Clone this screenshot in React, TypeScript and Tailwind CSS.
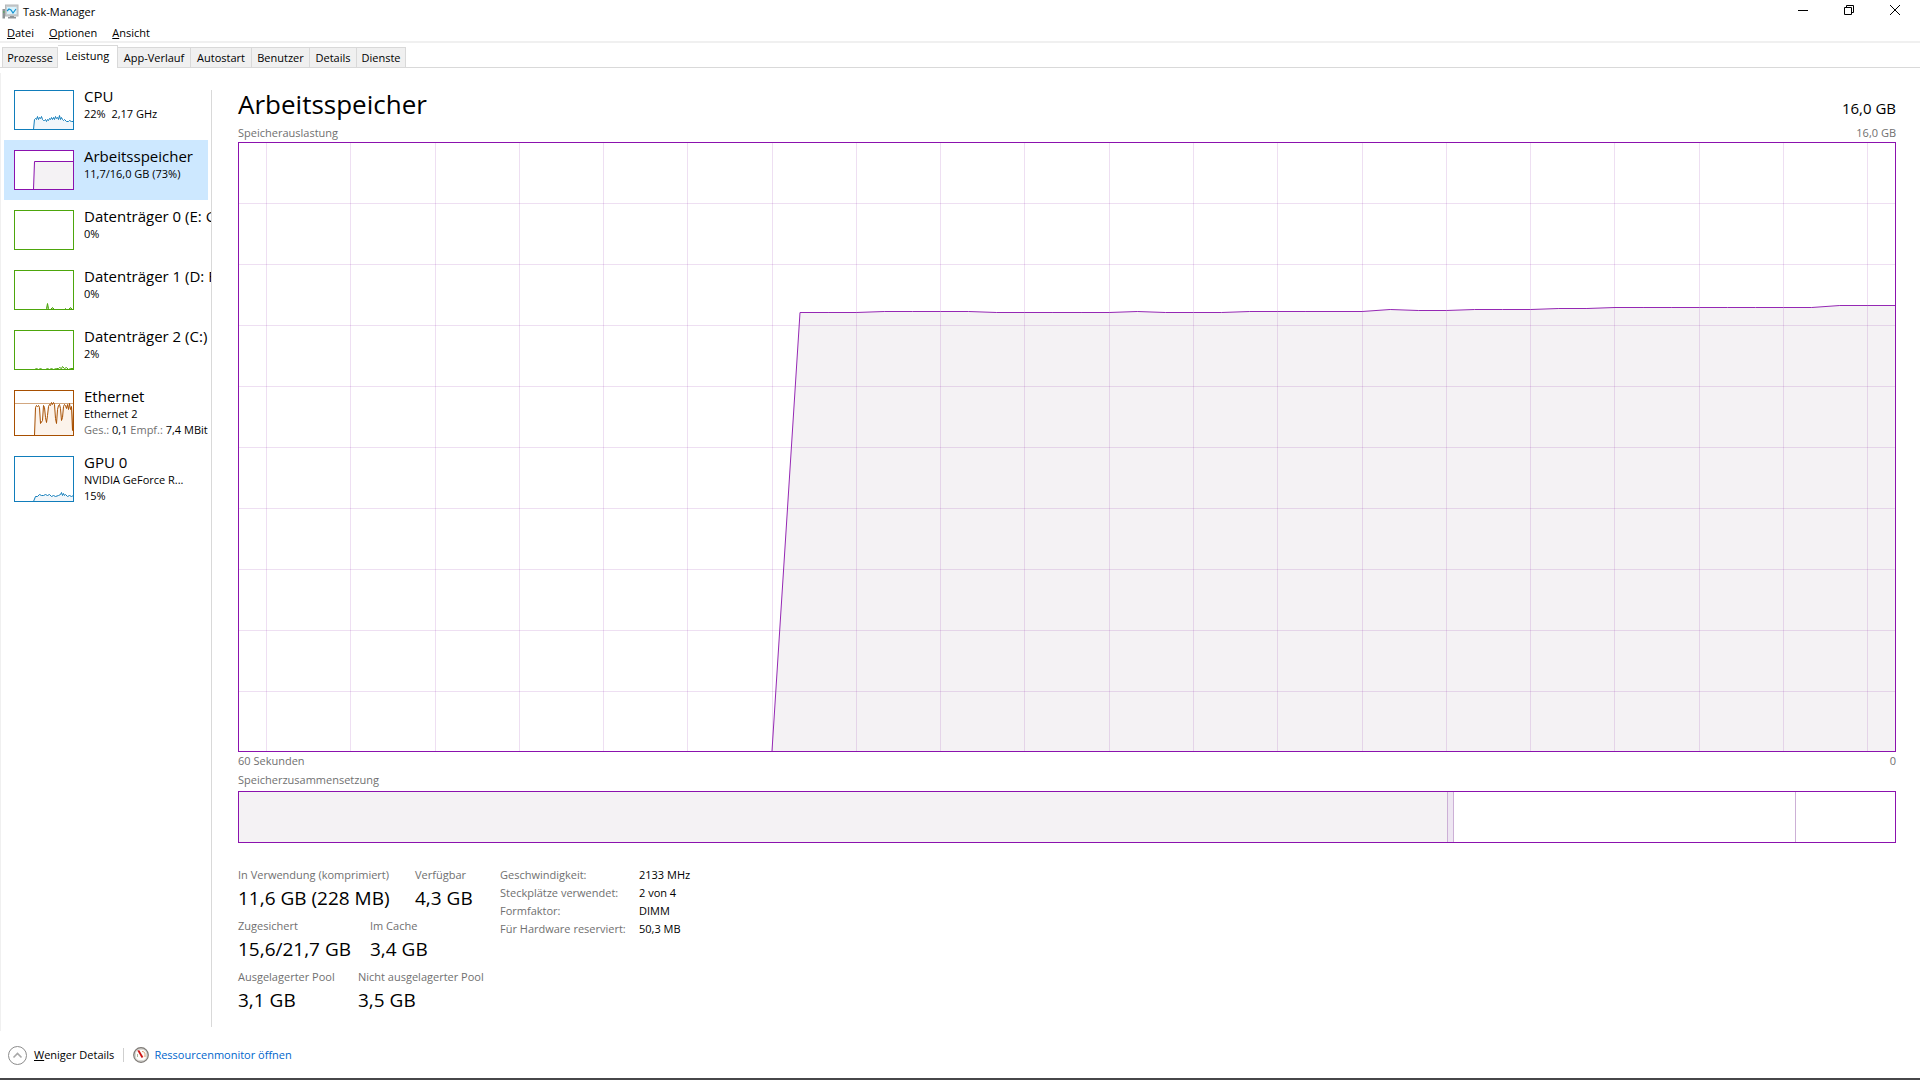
import React from 'react';
import { clsx } from 'clsx';

type Point = [number, number];

interface Resource {
  title: string;
  lines: React.ReactNode[];
  stroke: string;
  fill: string;
  height: number;
  points: Point[];
  limit?: number;
}

const TABS = [
  { label: 'Prozesse', width: 'w-[56px]' },
  { label: 'Leistung', width: 'w-[60px]' },
  { label: 'App-Verlauf', width: 'w-[73px]' },
  { label: 'Autostart', width: 'w-[61px]' },
  { label: 'Benutzer', width: 'w-[58px]' },
  { label: 'Details', width: 'w-[47px]' },
  { label: 'Dienste', width: 'w-[49px]' },
];

const RESOURCES: Resource[] = [
  {
    title: 'CPU',
    lines: ['22%  2,17 GHz'],
    stroke: '#117dbb',
    fill: '#f1f6fa',
    height: 40,
    points: [
      [19, 39], [20, 29], [21, 28], [22, 29], [23, 26], [24, 29], [25, 27], [26, 28], [27, 26], [28, 29],
      [29, 30], [30, 30], [31, 29], [32, 31], [33, 29], [34, 30], [35, 28], [36, 29], [37, 27], [38, 29],
      [39, 27], [40, 29], [41, 26], [42, 28], [43, 27], [44, 29], [45, 25], [46, 29], [47, 27], [48, 29],
      [49, 30], [50, 29], [52, 31], [54, 31], [55, 30], [57, 31], [59, 31],
    ],
  },
  {
    title: 'Arbeitsspeicher',
    lines: ['11,7/16,0 GB (73%)'],
    stroke: '#8b12ae',
    fill: '#f4f2f4',
    height: 40,
    points: [[19, 39], [20, 11], [59, 11]],
  },
  {
    title: 'Datenträger 0 (E: G',
    lines: ['0%'],
    stroke: '#4da60c',
    fill: '#eff7e9',
    height: 40,
    points: [],
  },
  {
    title: 'Datenträger 1 (D: F',
    lines: ['0%'],
    stroke: '#4da60c',
    fill: '#a5d086',
    height: 40,
    points: [
      [31, 39], [32, 38], [33, 33], [34, 38], [35, 39], [36, 39], [38, 37], [40, 39], [50, 39], [51, 38],
      [52, 39], [54, 39], [56, 37], [58, 39],
    ],
  },
  {
    title: 'Datenträger 2 (C:)',
    lines: ['2%'],
    stroke: '#4da60c',
    fill: '#eff7e9',
    height: 40,
    points: [
      [20, 39], [22, 38], [24, 39], [26, 38], [28, 39], [31, 39], [33, 38], [35, 39], [37, 38], [39, 39],
      [42, 38], [44, 38], [45, 37], [47, 38], [48, 36], [50, 38], [52, 37], [54, 39], [56, 38], [59, 38],
    ],
  },
  {
    title: 'Ethernet',
    lines: [
      'Ethernet 2',
      <>
        <span className="text-[#707070]">Ges.:</span> 0,1 <span className="text-[#707070]">Empf.:</span> 7,4 MBit
      </>,
    ],
    stroke: '#a74f01',
    fill: '#fcf3eb',
    height: 46,
    limit: 13,
    points: [
      [20, 45], [21, 17], [22, 15], [23, 16], [24, 15], [25, 17], [26, 33], [28, 30], [29, 15], [30, 17],
      [31, 27], [32, 32], [33, 25], [34, 16], [35, 14], [36, 15], [37, 12], [38, 14], [39, 12], [40, 14],
      [41, 28], [42, 33], [43, 19], [44, 15], [45, 14], [46, 18], [47, 30], [48, 27], [49, 16], [50, 14],
      [51, 15], [52, 18], [53, 14], [54, 19], [55, 13], [56, 19], [57, 16], [58, 40], [59, 17],
    ],
  },
  {
    title: 'GPU 0',
    lines: ['NVIDIA GeForce R...', '15%'],
    stroke: '#117dbb',
    fill: '#f1f6fa',
    height: 46,
    points: [
      [19, 45], [21, 40], [23, 40], [25, 38], [27, 39], [29, 39], [31, 38], [33, 39], [35, 38], [37, 40],
      [39, 39], [41, 40], [44, 39], [46, 38], [47, 36], [48, 39], [49, 37], [50, 39], [51, 38], [53, 40],
      [55, 39], [57, 40], [59, 39],
    ],
  },
];

const STATS = [
  [
    { label: 'In Verwendung (komprimiert)', value: '11,6 GB (228 MB)', width: 'w-[177px]' },
    { label: 'Verfügbar', value: '4,3 GB', width: 'w-auto' },
  ],
  [
    { label: 'Zugesichert', value: '15,6/21,7 GB', width: 'w-[132px]' },
    { label: 'Im Cache', value: '3,4 GB', width: 'w-auto' },
  ],
  [
    { label: 'Ausgelagerter Pool', value: '3,1 GB', width: 'w-[120px]' },
    { label: 'Nicht ausgelagerter Pool', value: '3,5 GB', width: 'w-auto' },
  ],
];

const SPECS = [
  ['Geschwindigkeit:', '2133 MHz'],
  ['Steckplätze verwendet:', '2 von 4'],
  ['Formfaktor:', 'DIMM'],
  ['Für Hardware reserviert:', '50,3 MB'],
];

// One sample per second, newest on the right; values are y in a 1658x610 plot
const SAMPLES = [
  610, 170, 170, 170, 169, 169, 169, 169, 170, 170, 170, 170, 170, 169, 170, 170, 170, 169, 169, 169, 169,
  169, 167, 168, 168, 167, 167, 167, 166, 166, 165, 165, 165, 165, 165, 165, 165, 165, 163, 163, 163,
];

const toPath = (points: Point[]) => points.map(([x, y]) => `${x + 0.5},${y + 0.5}`).join(' ');

const Thumbnail: React.FC<{ item: Resource }> = ({ item }) => {
  const { stroke, fill, height, points, limit } = item;
  const first = points[0];
  const last = points[points.length - 1];

  return (
    <svg width="60" height={height} viewBox={`0 0 60 ${height}`} className="mt-[3px] shrink-0">
      <rect x="0.5" y="0.5" width="59" height={height - 1} fill="#fff" stroke={stroke} />
      {limit && <path d={`M1 ${limit + 0.5}H59`} stroke="#d2a780" />}
      {first && (
        <>
          <polygon points={`${toPath(points)} ${last[0]},${height - 1} ${first[0]},${height - 1}`} fill={fill} />
          <polyline points={toPath(points)} fill="none" stroke={stroke} />
        </>
      )}
      <rect x="0.5" y="0.5" width="59" height={height - 1} fill="none" stroke={stroke} />
    </svg>
  );
};

const MemoryChart: React.FC = () => {
  const step = 1658 / 59;
  const start = 1658 - step * (SAMPLES.length - 1);
  const line = SAMPLES.map((y, i) => `${(start + i * step).toFixed(1)},${y + 0.5}`).join(' ');

  return (
    <div className="min-h-0 flex-1 border border-[#8b12ae]">
      <svg viewBox="1 1 1656 608" preserveAspectRatio="none" className="block h-full w-full">
        <polygon points={`${line} 1658,610`} fill="#f4f2f4" />
        {Array.from({ length: 20 }, (_, i) => (
          <path key={i} d={`M${Math.round(28 + i * 84.27) + 0.5} 0V610`} stroke="#8a2aa8" strokeOpacity="0.15" />
        ))}
        {Array.from({ length: 9 }, (_, i) => (
          <path key={i} d={`M0 ${(i + 1) * 61 + 0.5}H1658`} stroke="#8a2aa8" strokeOpacity="0.15" />
        ))}
        <polyline points={line} fill="none" stroke="#9528b4" />
      </svg>
    </div>
  );
};

const TitleBar: React.FC = () => (
  <header className="flex h-6 items-center pl-[2px]">
    <svg width="17" height="16" viewBox="0 0 17 16" className="mr-1">
      <rect x="0.5" y="5" width="2.5" height="9.5" fill="#8e9496" />
      <path d="M1 8h1.5" stroke="#3fae49" />
      <rect x="3.5" y="1" width="12.5" height="11" fill="#c9cdcf" stroke="#b4b8ba" />
      <rect x="5" y="3" width="9.5" height="7" fill="#d8f3fd" />
      <path d="M5 7l2-2 2 1 2 3 3-4" fill="none" stroke="#1591cf" strokeWidth="1.2" />
      <path d="M8 12h4v1h2v1.5H6V13h2z" fill="#8f9497" />
    </svg>
    <h1 className="text-[11px] leading-4">Task-Manager</h1>
    <div className="ml-auto flex self-start pr-[2px]">
      <button aria-label="Minimieren" className="flex h-5 w-[46px] items-center justify-center">
        <svg width="10" height="10" viewBox="0 0 10 10" stroke="#000"><path d="M0 5.5h10" /></svg>
      </button>
      <button aria-label="Verkleinern" className="flex h-5 w-[46px] items-center justify-center">
        <svg width="10" height="10" viewBox="0 0 10 10" fill="none" stroke="#000">
          <path d="M0.5 2.5h7v7h-7zM2.5 2.5v-2h7v7h-2" />
        </svg>
      </button>
      <button aria-label="Schließen" className="flex h-5 w-[46px] items-center justify-center">
        <svg width="10" height="10" viewBox="0 0 10 10" stroke="#000"><path d="M0 0l10 10M10 0L0 10" /></svg>
      </button>
    </div>
  </header>
);

const Sidebar: React.FC = () => (
  <nav className="w-[210px] shrink-0 overflow-hidden pt-[7px] pl-[3px]">
    {RESOURCES.map((item, index) => (
      <button
        key={item.title}
        className={clsx(
          'flex w-[204px] items-start gap-[10px] pt-[7px] pl-[10px] text-left whitespace-nowrap',
          item.height > 40 ? 'h-[66px]' : 'h-[60px]',
          index === 1 && 'bg-[#cde8ff]'
        )}
      >
        <Thumbnail item={item} />
        <span>
          <span className="block text-[15px] leading-[19px]">{item.title}</span>
          {item.lines.map((text, i) => (
            <span key={i} className="block text-[11px] leading-4 whitespace-pre">{text}</span>
          ))}
        </span>
      </button>
    ))}
  </nav>
);

const Composition: React.FC = () => (
  <div className="mt-px flex h-[52px] border border-[#8b12ae]">
    <div className="w-[73%] border-r border-[#ccb0d6] bg-[#f4f2f4]" />
    <div className="w-[6px] border-r border-[#ccb0d6] bg-[#eee6f2]" />
    <div className="flex-1 border-r border-[#ccb0d6]" />
    <div className="w-[6%]" />
  </div>
);

const Footer: React.FC = () => (
  <footer className="flex h-[49px] items-center border-b-2 border-[#47474a] pt-px pl-2 text-[11px]">
    <button className="flex items-center gap-[7px]">
      <svg width="19" height="19" viewBox="0 0 19 19" fill="none">
        <circle cx="9.5" cy="9.5" r="9" stroke="#8c8c8c" />
        <path d="M5.5 11.5l4-4 4 4" stroke="#a8a8a8" strokeWidth="1.6" />
      </svg>
      <span><u>W</u>eniger Details</span>
    </button>
    <div className="mx-[9px] h-[14px] w-px bg-[#cfcfcf]" />
    <a href="#" className="flex items-center gap-[5px] text-[#0066cc]">
      <svg width="16" height="16" viewBox="0 0 16 16">
        <circle cx="8" cy="8" r="7.3" fill="#d9d8d4" stroke="#7d7975" strokeWidth="1.2" />
        <rect x="3" y="3" width="10" height="10" rx="3.5" fill="#fdfcfa" />
        <path d="M9 4.5c2 0 3 1.2 3 3v2.5" fill="none" stroke="#d9986c" />
        <path d="M4.5 7v3" stroke="#a9b8a0" />
        <path d="M4.3 3.5l2-.3 4 6.8-1.6 1z" fill="#cf1313" />
      </svg>
      Ressourcenmonitor öffnen
    </a>
  </footer>
);

const App: React.FC = () => {
  return (
    <div className="flex h-screen flex-col overflow-hidden bg-white font-['Open_Sans','Noto_Sans',sans-serif] text-black">
      <TitleBar />
      <div className="flex h-[19px] shrink-0 items-center gap-[15px] border-b-2 border-[#f0f0f0] pl-[7px] text-[11px] leading-4">
        <button><u>D</u>atei</button>
        <button><u>O</u>ptionen</button>
        <button><u>A</u>nsicht</button>
      </div>

      <div role="tablist" className="flex h-[25px] shrink-0 items-end border-b border-[#d9d9d9] pl-[2px] text-[11px] leading-4">
        {TABS.map(({ label, width }) => (
          <button
            key={label}
            role="tab"
            aria-selected={label === 'Leistung'}
            className={clsx(
              'border-t border-r border-[#d9d9d9] whitespace-nowrap first:border-l',
              width,
              label === 'Leistung' ? '-mb-px h-[23px] bg-white pb-[2px]' : 'h-5 bg-[#f0f0f0]'
            )}
          >
            {label}
          </button>
        ))}
      </div>

      <div className="mt-[5px] flex min-h-0 flex-1 border-l border-[#f0f0f0]">
        <Sidebar />
        <div className="mt-[17px] mb-1 w-px shrink-0 bg-[#d9d9d9]" />
        <main className="flex min-w-0 flex-1 flex-col pt-[11px] pr-6 pb-[17px] pl-[26px] text-[11px] leading-[18px] text-[#707070]">
          <div className="flex items-baseline justify-between text-black">
            <h2 className="text-[26px] leading-10">Arbeitsspeicher</h2>
            <span className="text-[15px]">16,0 GB</span>
          </div>
          <div className="flex justify-between">
            <span>Speicherauslastung</span>
            <span>16,0 GB</span>
          </div>
          <MemoryChart />
          <div className="flex justify-between">
            <span>60 Sekunden</span>
            <span>0</span>
          </div>
          <p className="leading-5">Speicherzusammensetzung</p>
          <Composition />

          <div className="mt-[23px] flex">
            <div className="flex w-[262px] shrink-0 flex-col gap-[5px] whitespace-nowrap">
              {STATS.map((row) => (
                <dl key={row[0].label} className="flex">
                  {row.map(({ label, value, width }) => (
                    <div key={label} className={clsx('shrink-0', width)}>
                      <dt>{label}</dt>
                      <dd className="text-[19px] leading-7 text-black">{value}</dd>
                    </div>
                  ))}
                </dl>
              ))}
            </div>
            <table className="self-start whitespace-nowrap">
              <tbody>
                {SPECS.map(([name, value]) => (
                  <tr key={name}>
                    <th scope="row" className="w-[139px] p-0 text-left font-normal">{name}</th>
                    <td className="p-0 text-black">{value}</td>
                  </tr>
                ))}
              </tbody>
            </table>
          </div>
        </main>
      </div>
      <Footer />
    </div>
  );
};

export default App;
